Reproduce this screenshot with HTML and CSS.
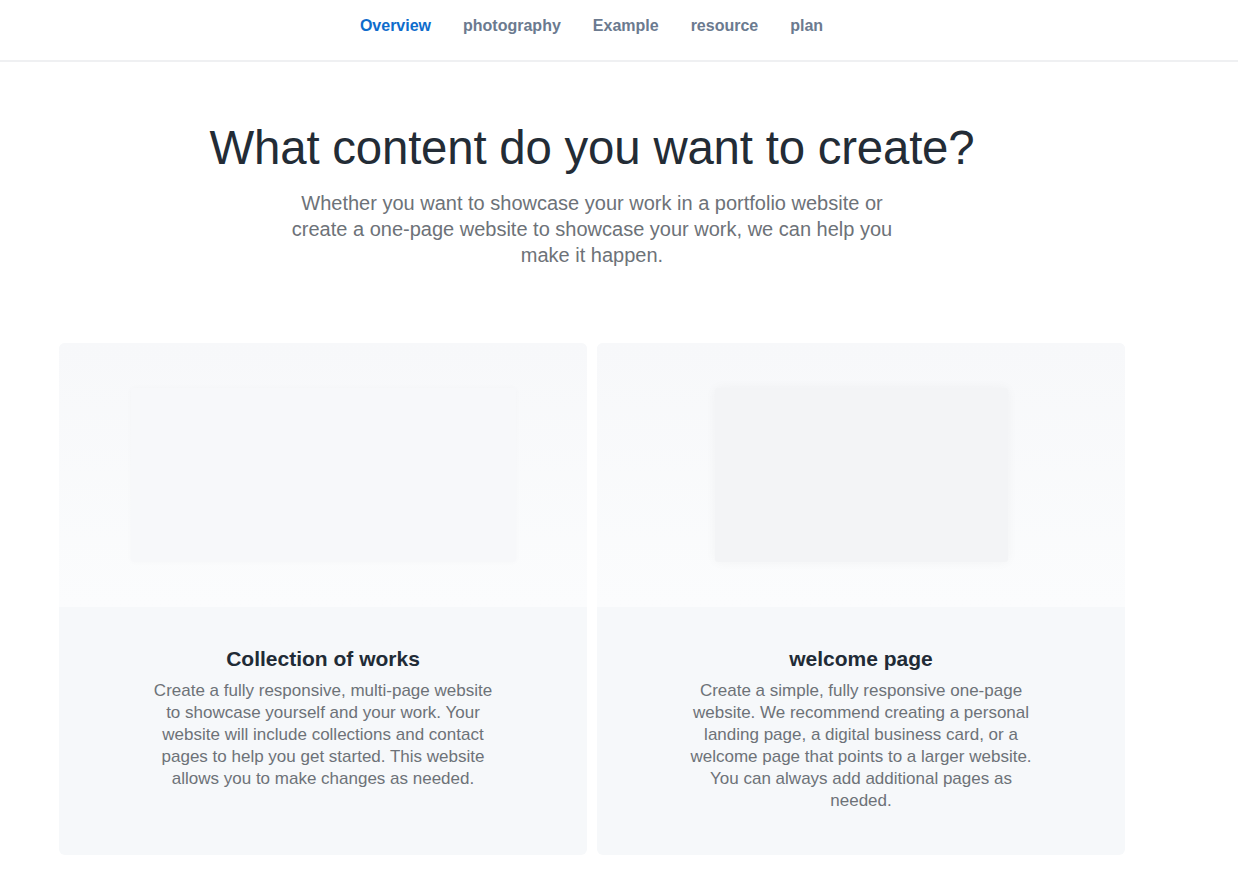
FILE: index.html
```html
<!DOCTYPE html>
<html lang="en">
<head>
<meta charset="utf-8">
<title>What content do you want to create?</title>
<link rel="stylesheet" href="styles.css">
</head>
<body>
<header class="topbar">
  <nav class="nav">
    <a class="nav-link active" href="#">Overview</a>
    <a class="nav-link" href="#">photography</a>
    <a class="nav-link" href="#">Example</a>
    <a class="nav-link" href="#">resource</a>
    <a class="nav-link" href="#">plan</a>
  </nav>
</header>
<main class="page">
  <section class="hero">
    <h1 class="hero-title">What content do you want to create?</h1>
    <p class="hero-sub">Whether you want to showcase your work in a portfolio website or create a one-page website to showcase your work, we can help you make it happen.</p>
  </section>
  <section class="cards">
    <article class="card">
      <div class="card-media">
        <div class="shot shot-wide"></div>
      </div>
      <div class="card-body">
        <h2 class="card-title">Collection of works</h2>
        <p class="card-text">Create a fully responsive, multi-page website to showcase yourself and your work. Your website will include collections and contact pages to help you get started. This website allows you to make changes as needed.</p>
      </div>
    </article>
    <article class="card">
      <div class="card-media">
        <div class="shot shot-narrow"></div>
      </div>
      <div class="card-body">
        <h2 class="card-title">welcome page</h2>
        <p class="card-text">Create a simple, fully responsive one-page website. We recommend creating a personal landing page, a digital business card, or a welcome page that points to a larger website. You can always add additional pages as needed.</p>
      </div>
    </article>
  </section>
</main>
</body>
</html>
```

FILE: styles.css
```css
* { box-sizing: border-box; }
html, body { margin: 0; padding: 0; background: #ffffff; }
body {
  font-family: "Liberation Sans", Arial, sans-serif;
  color: #212b36;
}
.topbar {
  height: 62px;
  border-bottom: 2px solid #eff0f2;
  display: flex;
  justify-content: center;
  padding-right: 55px;
}
.nav {
  display: flex;
  gap: 32px;
  align-items: flex-start;
  padding-top: 16px;
}
.nav-link {
  font-size: 16px;
  font-weight: 700;
  color: #6b7a8f;
  text-decoration: none;
  line-height: 20px;
}
.nav-link.active { color: #0e6ccc; }

.page {
  width: 1066px;
  margin-left: 59px;
}
.hero {
  display: flex;
  flex-direction: column;
  align-items: center;
  padding-top: 58px;
}
.hero-title {
  margin: 0;
  font-size: 47.4px;
  font-weight: 400;
  line-height: 56px;
  color: #232c36;
  letter-spacing: -0.2px;
}
.hero-sub {
  margin: 14px 0 0;
  width: 610px;
  text-align: center;
  font-size: 20px;
  line-height: 26px;
  color: #6d7278;
}
.cards {
  margin-top: 75px;
  display: grid;
  grid-template-columns: 528px 528px;
  gap: 10px;
}
.card {
  border-radius: 6px;
  overflow: hidden;
  background: #f6f8fa;
  height: 512px;
  display: flex;
  flex-direction: column;
}
.card-media {
  height: 264px;
  background: linear-gradient(#f7f8fa, #fbfcfd);
  display: flex;
  justify-content: center;
  padding-top: 45px;
}
.shot {
  height: 174px;
  border-radius: 3px;
}
.shot-wide {
  width: 385px;
  background: #f7f8fa;
  box-shadow: 0 0 6px rgba(0,0,0,0.025);
}
.shot-narrow {
  width: 293px;
  background: #f3f4f6;
  box-shadow: 0 0 12px rgba(0,0,0,0.04);
}
.card-body {
  padding: 40px 60px 0;
  text-align: center;
}
.card-title {
  margin: 0;
  font-size: 21px;
  font-weight: 700;
  line-height: 24px;
  color: #212b36;
}
.card-text {
  margin: 9px auto 0;
  width: 350px;
  font-size: 17px;
  line-height: 22px;
  color: #6d7278;
}
```
